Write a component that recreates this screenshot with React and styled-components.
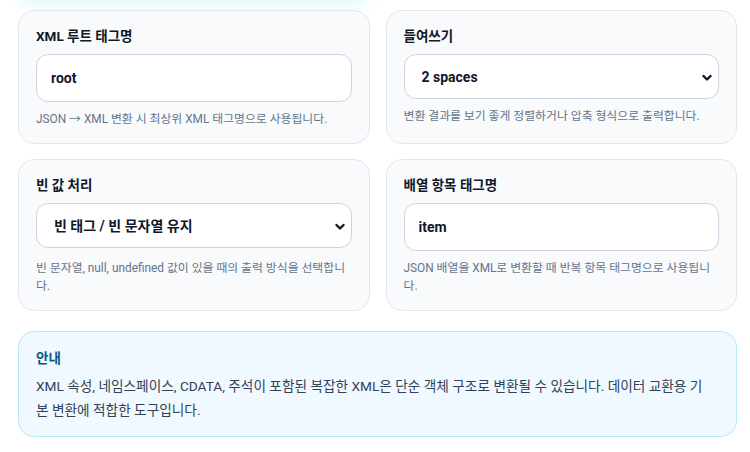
import React from 'react';
import styled, { createGlobalStyle } from 'styled-components';

const GlobalStyle = createGlobalStyle`
  * { box-sizing: border-box; }
  html, body { margin: 0; padding: 0; background: #ffffff; overflow: hidden; }
  body {
    font-family: Roboto, "Noto Sans CJK KR", sans-serif;
    color: #0f172a;
  }
`;

const Page = styled.div`
  padding: 0 13px 0 18px;
`;

// bottom edge of the panel scrolled off above; only its glow shows
const PrevPanel = styled.div`
  width: 352px;
  height: 40px;
  margin-top: -40px;
  margin-bottom: 10px;
  background: #ffffff;
  border-radius: 16px;
  box-shadow: 0 4px 16px rgba(34, 211, 238, 0.16);
`;

const Grid = styled.div`
  display: grid;
  grid-template-columns: 1fr 1fr;
  column-gap: 16px;
  row-gap: 15px;
`;

const Card = styled.div`
  background: #f8fafc;
  border: 1px solid #e2e8f0;
  border-radius: 16px;
  padding: 15px 17px;
  display: flex;
  flex-direction: column;
`;

const Label = styled.label`
  font-size: 13.5px;
  font-weight: 700;
  line-height: 20px;
  color: #111827;
  margin-bottom: 8px;
`;

const TextInput = styled.input`
  height: 48px;
  width: 100%;
  border: 1px solid #cbd5e1;
  border-radius: 12px;
  background: #ffffff;
  padding: 0 14px;
  font-family: inherit;
  font-size: 14px;
  font-weight: 700;
  color: #0f172a;
  outline: none;
`;

const SelectWrap = styled.div`
  position: relative;
  height: 45px;
  margin-bottom: ${(p) => (p.$tall ? 3 : 0)}px;
`;

const Select = styled.select`
  appearance: none;
  -webkit-appearance: none;
  width: 100%;
  height: 100%;
  border: 1px solid #cbd5e1;
  border-radius: 12px;
  background: #ffffff;
  padding: 0 30px 0 17px;
  font-family: inherit;
  font-size: 14px;
  font-weight: 700;
  color: #0f172a;
  outline: none;
`;

const Chevron = styled.svg`
  position: absolute;
  right: 7px;
  top: 50%;
  width: 10px;
  height: 10px;
  margin-top: -4px;
  pointer-events: none;
`;

const Help = styled.p`
  margin: 8px 0 0;
  font-size: 11.85px;
  line-height: 18px;
  color: #64748b;
`;

const Notice = styled.div`
  margin-top: 20px;
  background: #f0f9ff;
  border: 1px solid #bae6fd;
  border-radius: 16px;
  padding: 15px 28px 14px 17px;
`;

const NoticeTitle = styled.div`
  font-size: 13.5px;
  font-weight: 700;
  line-height: 22px;
  color: #075985;
  margin-bottom: 5px;
`;

const NoticeBody = styled.p`
  margin: 0;
  font-size: 13.66px;
  line-height: 24px;
  color: #334155;
`;

const Arrow = () => (
  <Chevron viewBox="0 0 10 10">
    <polyline points="1.5,3 5,6.5 8.5,3" fill="none" stroke="#111827" strokeWidth="2.4" strokeLinecap="round" strokeLinejoin="round" />
  </Chevron>
);

export default function App() {
  return (
    <>
      <GlobalStyle />
      <Page>
        <PrevPanel />
        <Grid>
          <Card>
            <Label>XML 루트 태그명</Label>
            <TextInput defaultValue="root" />
            <Help>JSON → XML 변환 시 최상위 XML 태그명으로 사용됩니다.</Help>
          </Card>
          <Card>
            <Label>들여쓰기</Label>
            <SelectWrap>
              <Select defaultValue="2">
                <option value="2">2 spaces</option>
                <option value="4">4 spaces</option>
                <option value="tab">Tab</option>
                <option value="0">압축</option>
              </Select>
              <Arrow />
            </SelectWrap>
            <Help>변환 결과를 보기 좋게 정렬하거나 압축 형식으로 출력합니다.</Help>
          </Card>
          <Card>
            <Label>빈 값 처리</Label>
            <SelectWrap $tall>
              <Select defaultValue="keep">
                <option value="keep">빈 태그 / 빈 문자열 유지</option>
                <option value="omit">생략</option>
                <option value="null">null 로 변환</option>
              </Select>
              <Arrow />
            </SelectWrap>
            <Help>빈 문자열, null, undefined 값이 있을 때의 출력 방식을 선택합니다.</Help>
          </Card>
          <Card>
            <Label>배열 항목 태그명</Label>
            <TextInput defaultValue="item" />
            <Help>JSON 배열을 XML로 변환할 때 반복 항목 태그명으로 사용됩니다.</Help>
          </Card>
        </Grid>
        <Notice>
          <NoticeTitle>안내</NoticeTitle>
          <NoticeBody>
            XML 속성, 네임스페이스, CDATA, 주석이 포함된 복잡한 XML은 단순 객체 구조로 변환될 수 있습니다. 데이터 교환용 기본 변환에 적합한 도구입니다.
          </NoticeBody>
        </Notice>
      </Page>
    </>
  );
}
